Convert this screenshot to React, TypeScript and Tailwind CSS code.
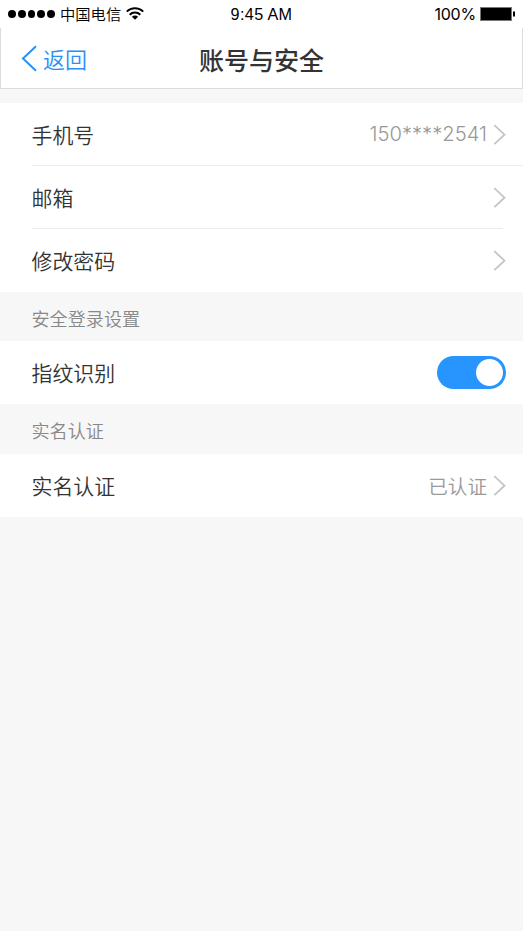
import type { ReactNode } from 'react'

function Chevron() {
  return (
    <svg className="ml-[6px] h-[22px] w-[13px] shrink-0" viewBox="0 0 13 22" fill="none" stroke="#c4c4c4" strokeWidth="1.8">
      <path d="M1.3 1.2 11.5 10.7 1.3 20.2" />
    </svg>
  )
}

function Row({ label, children }: { label: string; children: ReactNode }) {
  return (
    <div className="flex h-[63px] items-center bg-white pl-[31.5px] pr-[17px] text-[20.9px] text-[#333]">
      <span className="flex-1">{label}</span>
      {children}
    </div>
  )
}

function SectionTitle({ children, className }: { children: ReactNode; className: string }) {
  return <div className={`flex items-center pl-[31.5px] pt-1 text-[18.1px] text-[#888] ${className}`}>{children}</div>
}

function StatusBar() {
  return (
    <div className="grid h-7 grid-cols-[1fr_auto_1fr] items-center bg-white pl-2 pr-[8px] text-black">
      <div className="flex items-center">
        <div className="flex gap-[2px]">
          {[0, 1, 2, 3, 4].map((i) => (
            <span key={i} className="size-[7.8px] rounded-full bg-black" />
          ))}
        </div>
        <span className="-mt-[3px] ml-[5px] text-[15.3px] leading-7">中国电信</span>
        <svg className="-mt-px ml-[5px] h-[13px] w-[18px]" viewBox="0 0 18 13" fill="none" stroke="#000" strokeWidth="2">
          <path d="M.8 4.6a11.6 11.6 0 0 1 16.4 0M3.7 7.7a7.5 7.5 0 0 1 10.6 0" />
          <path d="M9 12.7 5.9 9.7a4.4 4.4 0 0 1 6.2 0Z" fill="#000" stroke="none" />
        </svg>
      </div>
      <span className="pt-px font-['Liberation_Sans',sans-serif] text-[16.2px] tracking-[0.35px]">9:45 AM</span>
      <div className="flex items-center justify-end">
        <span className="font-[Inter,sans-serif] text-[16px] font-normal tracking-[-0.2px]">100%</span>
        <svg className="ml-1 h-[14px] w-[35px]" viewBox="0 0 35 14">
          <rect x=".5" y=".5" width="31" height="13" fill="#000" stroke="#777" />
          <rect x="33" y="4.5" width="2" height="5" fill="#000" />
        </svg>
      </div>
    </div>
  )
}

export default function App() {
  return (
    <div className="min-h-screen bg-[#f7f7f7] font-['Noto_Sans_CJK_SC',sans-serif] font-[350]">
      <StatusBar />
      <header className="grid h-[61px] grid-cols-[1fr_auto_1fr] items-center border-x border-b border-[#dcdcdc] bg-white px-5">
        <div className="flex items-center pt-px text-[22px] text-[#2b90f5]">
          <svg className="mr-[6px] h-[27px] w-4" viewBox="0 0 16 27" fill="none" stroke="currentColor" strokeWidth="2">
            <path d="M15 1.2 2 13.5 15 25.8" />
          </svg>
          返回
        </div>
        <h1 className="pt-[3px] text-[25px] font-medium text-[#333]">账号与安全</h1>
      </header>

      <div className="mt-[14px] bg-white">
        <Row label="手机号">
          <span className="font-[Inter,sans-serif] text-[20.2px] font-light text-[#999]">150****2541</span>
          <Chevron />
        </Row>
        <div className="-mt-px ml-8 h-px bg-[#ececec]" />
        <Row label="邮箱">
          <Chevron />
        </Row>
        <div className="-mt-px ml-8 mr-5 h-px bg-[#ececec]" />
        <Row label="修改密码">
          <Chevron />
        </Row>
      </div>

      <SectionTitle className="h-[49px]">安全登录设置</SectionTitle>
      <Row label="指纹识别">
        <div className="flex h-[33px] w-[69px] items-center justify-end rounded-full bg-[#2894fe] pr-[3px]">
          <span className="size-[27px] rounded-full bg-white" />
        </div>
      </Row>

      <SectionTitle className="h-[50px]">实名认证</SectionTitle>
      <Row label="实名认证">
        <span className="text-[19.6px] text-[#999]">已认证</span>
        <Chevron />
      </Row>
    </div>
  )
}
